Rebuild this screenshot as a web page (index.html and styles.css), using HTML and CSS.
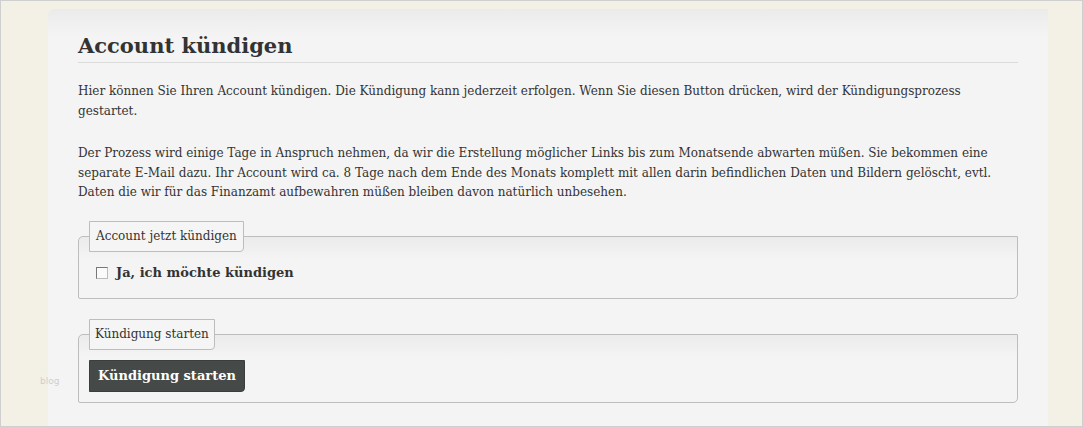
FILE: index.html
```html
<!DOCTYPE html>
<html lang="de">
<head>
<meta charset="utf-8">
<title>Account kündigen</title>
<link rel="stylesheet" href="styles.css">
</head>
<body>
<div class="frame">
  <div class="panel">
    <h1 class="title">Account kündigen</h1>
    <p class="text">Hier können Sie Ihren Account kündigen. Die Kündigung kann jederzeit erfolgen. Wenn Sie diesen Button drücken, wird der Kündigungsprozess gestartet.</p>
    <p class="text text-second">Der Prozess wird einige Tage in Anspruch nehmen, da wir die Erstellung möglicher Links bis zum Monatsende abwarten müßen. Sie bekommen eine separate E-Mail dazu. Ihr Account wird ca. 8 Tage nach dem Ende des Monats komplett mit allen darin befindlichen Daten und Bildern gelöscht, evtl. Daten die wir für das Finanzamt aufbewahren müßen bleiben davon natürlich unbesehen.</p>
    <fieldset class="box">
      <legend class="legend">Account jetzt kündigen</legend>
      <label class="check"><span class="checkbox"></span>Ja, ich möchte kündigen</label>
    </fieldset>
    <fieldset class="box box-second">
      <legend class="legend">Kündigung starten</legend>
      <button class="btn" type="button">Kündigung starten</button>
    </fieldset>
  </div>
  <span class="watermark">blog</span>
</div>
</body>
</html>
```

FILE: styles.css
```css
html, body {
  margin: 0;
  padding: 0;
}
body {
  background: #f3f1e6;
  font-family: "DejaVu Serif", "Liberation Serif", serif;
  color: #333;
}
.frame {
  position: relative;
  width: 1083px;
  height: 427px;
  box-sizing: border-box;
  border: 1px solid #cfcfcf;
  padding: 8px 0 0 47px;
  overflow: hidden;
  background: #f3f1e6;
}
.panel {
  width: 1000px;
  height: 430px;
  box-sizing: border-box;
  padding: 21px 30px 0 30px;
  background: linear-gradient(#ebebeb 0px, #f4f4f4 28px, #f4f4f4 100%);
  border-top-left-radius: 6px;
}
.title {
  margin: 0;
  font-size: 21px;
  font-weight: bold;
  line-height: 32px;
  padding-bottom: 0;
  border-bottom: 1px solid #dcdcdc;
  color: #333;
}
.text {
  margin: 19px 0 0 0;
  font-size: 12px;
  line-height: 19.5px;
  color: #333;
}
.text-second {
  margin-top: 23px;
}
.box {
  margin: 18px 0 0 0;
  padding: 11px 10px 15px 10px;
  border: 1px solid #bdbdbd;
  border-top-left-radius: 5px;
  border-bottom-right-radius: 5px;
  border-bottom-left-radius: 2px;
  background: linear-gradient(#ebebeb 0px, #f4f4f4 22px, #f4f4f4 100%);
}
.box-second {
  margin-top: 20px;
  padding-top: 4px;
  padding-bottom: 10px;
}
.legend {
  padding: 6px 6px 7px 6px;
  font-size: 12px;
  line-height: 16px;
  background: #f5f5f5;
  border: 1px solid #bdbdbd;
  border-bottom-right-radius: 4px;
  color: #333;
}
.box-second .legend {
  padding-left: 5px;
  padding-right: 5px;
}
.check {
  display: flex;
  align-items: center;
  gap: 8px;
  padding-left: 7px;
  font-size: 13px;
  font-weight: bold;
  line-height: 20px;
  color: #333;
}
.checkbox {
  width: 10px;
  height: 10px;
  border: 1px solid #777;
  border-right-color: #bbb;
  border-bottom-color: #bbb;
  background: #fafafa;
}
.btn {
  display: block;
  margin: 6px 0 0 0;
  padding: 5px 8px 6px 8px;
  background: #454a48;
  color: #fff;
  border: 1px solid #3a3e3c;
  border-bottom-right-radius: 4px;
  font-family: "DejaVu Serif", "Liberation Serif", serif;
  font-size: 13px;
  font-weight: bold;
  line-height: 19px;
}
.watermark {
  position: absolute;
  left: 39px;
  top: 375px;
  font-family: "DejaVu Sans", sans-serif;
  font-size: 9px;
  color: #cfcfcf;
}
```
